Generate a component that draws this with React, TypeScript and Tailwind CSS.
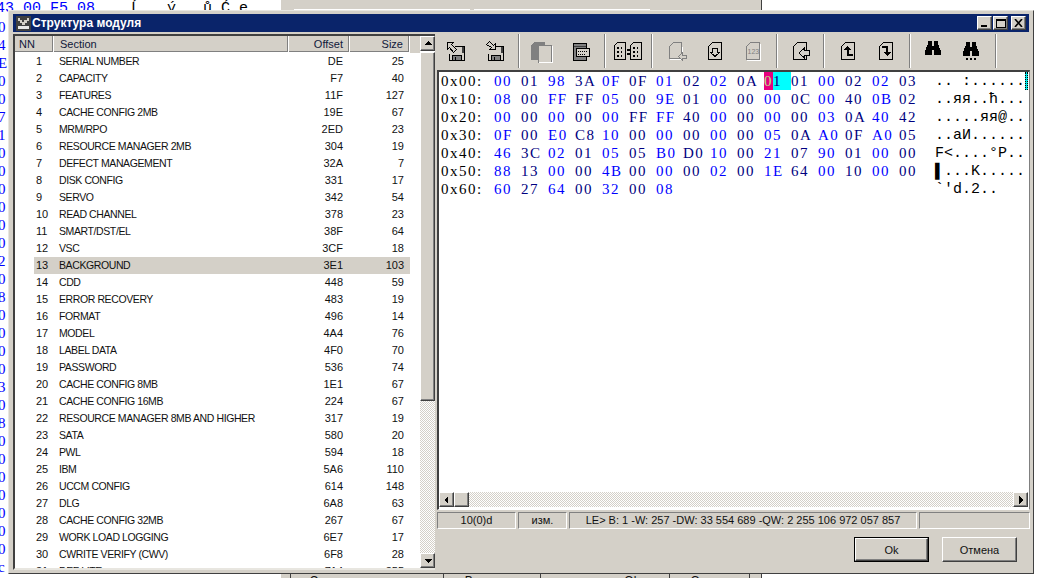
import type { ReactNode } from "react";

const raised =
  "bg-[#d4d0c8] border border-t-white border-l-white border-r-[#404040] border-b-[#404040] shadow-[inset_-1px_-1px_0_#808080]";
const thinSunken = "border border-t-[#808080] border-l-[#808080] border-r-white border-b-white";
const dither = "bg-[repeating-conic-gradient(#d4d0c8_0_25%,#fff_0_50%)] bg-[length:2px_2px]";

const sections: [string, string, string][] = [
  ["SERIAL NUMBER", "DE", "25"],
  ["CAPACITY", "F7", "40"],
  ["FEATURES", "11F", "127"],
  ["CACHE CONFIG 2MB", "19E", "67"],
  ["MRM/RPO", "2ED", "23"],
  ["RESOURCE MANAGER 2MB", "304", "19"],
  ["DEFECT MANAGEMENT", "32A", "7"],
  ["DISK CONFIG", "331", "17"],
  ["SERVO", "342", "54"],
  ["READ CHANNEL", "378", "23"],
  ["SMART/DST/EL", "38F", "64"],
  ["VSC", "3CF", "18"],
  ["BACKGROUND", "3E1", "103"],
  ["CDD", "448", "59"],
  ["ERROR RECOVERY", "483", "19"],
  ["FORMAT", "496", "14"],
  ["MODEL", "4A4", "76"],
  ["LABEL DATA", "4F0", "70"],
  ["PASSWORD", "536", "74"],
  ["CACHE CONFIG 8MB", "1E1", "67"],
  ["CACHE CONFIG 16MB", "224", "67"],
  ["RESOURCE MANAGER 8MB AND HIGHER", "317", "19"],
  ["SATA", "580", "20"],
  ["PWL", "594", "18"],
  ["IBM", "5A6", "110"],
  ["UCCM CONFIG", "614", "148"],
  ["DLG", "6A8", "63"],
  ["CACHE CONFIG 32MB", "267", "67"],
  ["WORK LOAD LOGGING", "6E7", "17"],
  ["CWRITE VERIFY (CWV)", "6F8", "28"],
  ["DEF LITE", "714", "355"],
];

const hexRows: { addr: string; bytes: string[]; ascii: string }[] = [
  { addr: "0x00:", bytes: "00 01 98 3A 0F 0F 01 02 02 0A 01 01 00 02 02 03".split(" "), ascii: ".. :......" },
  { addr: "0x10:", bytes: "08 00 FF FF 05 00 9E 01 00 00 00 0C 00 40 0B 02".split(" "), ascii: "..яя..ћ..." },
  { addr: "0x20:", bytes: "00 00 00 00 00 FF FF 40 00 00 00 00 03 0A 40 42".split(" "), ascii: ".....яя@.." },
  { addr: "0x30:", bytes: "0F 00 E0 C8 10 00 00 00 00 00 05 0A A0 0F A0 05".split(" "), ascii: "..аИ......" },
  { addr: "0x40:", bytes: "46 3C 02 01 05 05 B0 D0 10 00 21 07 90 01 00 00".split(" "), ascii: "F<....°P.." },
  { addr: "0x50:", bytes: "88 13 00 00 4B 00 00 00 02 00 1E 64 00 10 00 00".split(" "), ascii: "▌...K....." },
  { addr: "0x60:", bytes: "60 27 64 00 32 00 08".split(" "), ascii: "`'d.2.." },
];

const edgeChars = "0 4 E 0 0 7 1 0 0 0 0 0 0 2 0 8 0 0 0 0 3 0 8 0 0 0 0 0 0 0 c".split(" ");

const Tri = ({ dir }: { dir: "up" | "down" | "left" | "right" }) => {
  const pts = {
    up: "4,1 8,5 0,5",
    down: "0,2 8,2 4,6",
    left: "5,0 5,8 1,4",
    right: "2,0 2,8 6,4",
  }[dir];
  return (
    <svg width="8" height="8" viewBox="0 0 8 8" shapeRendering="crispEdges">
      <polygon points={pts} fill="#000" />
    </svg>
  );
};

const ScrollBtn = ({ dir }: { dir: "up" | "down" | "left" | "right" }) => (
  <div className={`w-[15px] h-[15px] shrink-0 flex items-center justify-center ${raised}`}>
    <Tri dir={dir} />
  </div>
);

const Icon = ({ children }: { children: ReactNode }) => (
  <svg width="20" height="20" viewBox="0 0 20 20" shapeRendering="crispEdges" fill="none">
    {children}
  </svg>
);

const Floppy = () => (
  <>
    <path d="M8.5 5.5H18.5V19.5H3.5V12.5" stroke="#000" />
    <rect x="7" y="15" width="8" height="4" fill="#808080" />
    <path d="M6.5 14.5H15.5V19.5H6.5ZM9.5 16V19" stroke="#000" />
    <path d="M16 6H18V12H16Z" fill="#404040" />
  </>
);

const FloppyOut = () => (
  <Icon>
    <Floppy />
    <path d="M1.5 1.5H7.5L5.5 3.5L10.5 8.5L7.5 11.5L3.5 6.5L1.5 8.5Z" fill="#d4d0c8" stroke="#000" />
  </Icon>
);

const FloppyIn = () => (
  <Icon>
    <Floppy />
    <path d="M10.5 8.5H4.5L6.5 6.5L1.5 3.5L4.5 0.5L8.5 4.5L10.5 2.5Z" fill="#d4d0c8" stroke="#000" />
  </Icon>
);

const Doc = ({ children }: { children?: ReactNode }) => (
  <Icon>
    <path d="M3.5 5.5L7.5 1.5H16.5V18.5H3.5Z" stroke="#000" />
    {children}
  </Icon>
);

const CopyIcon = () => (
  <svg width="22" height="24" viewBox="0 0 22 24" shapeRendering="crispEdges" fill="none">
    <path d="M3 3H14V6H7V21H0V6Z" fill="#808080" />
    <path d="M7.5 6.5H20.5V23.5H7.5Z" fill="#d4d0c8" stroke="#808080" />
    <path d="M21.5 7V23.5H8" stroke="#fff" />
  </svg>
);

const PrinterIcon = () => (
  <Icon>
    <path d="M2.5 2.5H15.5V19.5H2.5Z" fill="#808080" stroke="#000" />
    <path d="M3 5H15" stroke="#404040" />
    <path d="M5.5 7.5H18.5V15.5H5.5Z" fill="#d4d0c8" stroke="#000" />
    <path d="M7 10H17M7 13H15" stroke="#000" strokeDasharray="1 1" />
  </Icon>
);

const Bits = ({ x }: { x: number }) => (
  <g fill="#000">
    {[6, 10, 14].map((y) => (
      <g key={y}>
        <rect x={x} y={y} width="2" height="2" />
        <rect x={x + 4} y={y} width="1" height="2" />
      </g>
    ))}
  </g>
);

const CompareIcon = () => (
  <svg width="28" height="20" viewBox="0 0 28 20" shapeRendering="crispEdges" fill="none">
    <path d="M0.5 4.5L3.5 1.5H11.5V18.5H0.5Z" stroke="#000" />
    <path d="M16.5 4.5L19.5 1.5H27.5V18.5H16.5Z" stroke="#000" />
    <Bits x={3} />
    <Bits x={19} />
    <rect x="13" y="8" width="3" height="2" fill="#000" />
    <rect x="13" y="12" width="3" height="2" fill="#000" />
  </svg>
);

const GhostDoc = () => (
  <Icon>
    <path d="M2.5 5.5L6.5 1.5H14.5V17.5H2.5Z" stroke="#808080" />
    <path d="M3 18.5H15.5V6" stroke="#fff" />
    <path d="M11.5 15.5L15.5 11.5V14H19.5V17H15.5V19.5Z" fill="#d4d0c8" stroke="#808080" />
  </Icon>
);

const NumDoc = () => (
  <Icon>
    <path d="M3.5 5.5L7.5 1.5H16.5V18.5H3.5Z" stroke="#808080" />
    <path d="M4 19.5H17.5V3" stroke="#fff" />
    <text x="4.5" y="13" fontSize="7" fontFamily="Liberation Sans, sans-serif" fill="#808080">
      123
    </text>
  </Icon>
);

const Binoculars = ({ dots }: { dots?: boolean }) => (
  <svg width="16" height="18" viewBox="0 0 16 18" shapeRendering="crispEdges" className={dots ? "" : "-mt-[2px]"}>
    <path d="M3 0H7V5H9V0H13V3L16 10V14H9V9H7V14H0V10L3 3Z" fill="#000" />
    {dots && (
      <g fill="#000">
        <rect x="3" y="16" width="2" height="2" />
        <rect x="7" y="16" width="2" height="2" />
        <rect x="11" y="16" width="2" height="2" />
      </g>
    )}
  </svg>
);

const Slot = ({ className, children }: { className: string; children: ReactNode }) => (
  <div className={`${className} h-full flex items-center justify-center`}>{children}</div>
);

const Sep = ({ className }: { className: string }) => (
  <div className={`${className} h-[34px] flex justify-center`}>
    <div className="w-[2px] h-full border-l border-l-[#808080] border-r border-r-white" />
  </div>
);

const Toolbar = () => (
  <div className="h-[38px] flex items-center">
    <Slot className="w-[37px]"><FloppyOut /></Slot>
    <Slot className="w-[42px]"><FloppyIn /></Slot>
    <Sep className="w-[6px]" />
    <Slot className="w-[40px]"><CopyIcon /></Slot>
    <Slot className="w-[38px]"><PrinterIcon /></Slot>
    <Sep className="w-[10px]" />
    <Slot className="w-[36px]"><CompareIcon /></Slot>
    <Sep className="w-[12px]" />
    <Slot className="w-[38px]"><GhostDoc /></Slot>
    <Slot className="w-[37px]">
      <Doc>
        <path d="M7.5 7.5H12.5V11.5H14.5L10 15.5L5.5 11.5H7.5Z" stroke="#000" />
      </Doc>
    </Slot>
    <Slot className="w-[40px]"><NumDoc /></Slot>
    <Sep className="w-[8px]" />
    <Slot className="w-[38px]">
      <Doc>
        <path d="M19.5 9.5V14.5H14.5V17L9 12L14.5 7V9.5Z" fill="#d4d0c8" stroke="#000" />
      </Doc>
    </Slot>
    <Sep className="w-[10px]" />
    <Slot className="w-[37px]">
      <Doc>
        <path d="M9 5L13 9H11V13H15V15H9V9H6Z" fill="#000" />
      </Doc>
    </Slot>
    <Slot className="w-[40px]">
      <Doc>
        <path d="M6 5H12V11H15L11 15L7 11H10V7H6Z" fill="#000" />
      </Doc>
    </Slot>
    <Sep className="w-[8px]" />
    <Slot className="w-[37px]"><Binoculars /></Slot>
    <Slot className="w-[40px]"><Binoculars dots /></Slot>
    <Sep className="w-[10px]" />
  </div>
);

const SectionList = () => (
  <div className="ml-[1px] mt-[2px] w-[422px] h-[536px] flex border-l-2 border-t-2 border-l-[#404040] border-t-[#404040] border-b-2 border-b-[#e8e6e0] bg-white">
    <div className="w-[405px] overflow-hidden">
      <div className="h-[17px] flex bg-[#d4d0c8] text-[#10183a]">
        <div className="w-[39px] pl-[4px] border-r border-r-white border-b border-b-white shadow-[inset_-1px_-1px_0_#808080]">NN</div>
        <div className="w-[235px] pl-[6px] border-r border-r-white border-b border-b-white shadow-[inset_-1px_-1px_0_#808080]">Section</div>
        <div className="w-[61px] pr-[6px] text-right border-r border-r-white border-b border-b-white shadow-[inset_-1px_-1px_0_#808080]">Offset</div>
        <div className="w-[60px] pr-[6px] text-right border-r border-r-white border-b border-b-white shadow-[inset_-1px_-1px_0_#808080]">Size</div>
        <div className="flex-1" />
      </div>
      {sections.map(([name, offset, size], i) => (
        <div key={name} className="h-[17px] flex pl-[19px]">
          <div className={`w-[376px] flex ${i === 12 ? "bg-[#d4d0c8]" : ""}`}>
            <div className="w-[25px] pl-[2px]">{i + 1}</div>
            <div className="w-[235px] text-[10.5px] tracking-[-0.4px]">{name}</div>
            <div className="w-[60px] text-right -ml-[11px] mr-[1px]">{offset}</div>
            <div className="w-[60px] text-right">{size}</div>
          </div>
        </div>
      ))}
    </div>
    <div className="w-[15px] h-full flex flex-col">
      <ScrollBtn dir="up" />
      <div className={`w-[15px] h-[349px] mt-[1px] shrink-0 ${raised}`} />
      <div className={`flex-1 ${dither}`} />
      <ScrollBtn dir="down" />
    </div>
  </div>
);

const HexPanel = () => (
  <div className="h-[440px] flex flex-col border-l-2 border-t-2 border-l-[#404040] border-t-[#404040] border-r border-r-[#808080] border-b border-b-white bg-white">
    <div className="flex-1 pl-[2px] font-['Liberation_Mono',monospace] text-[15px] leading-[18px] whitespace-pre">
      {hexRows.map((row, r) => (
        <div key={row.addr} className="h-[18px] flex">
          <div className="w-[53px] text-black font-['Liberation_Serif',serif] tracking-[1.5px]">{row.addr}</div>
          <div className="w-[442px] flex font-['Liberation_Serif',serif] tracking-[1.5px]">
            {row.bytes.map((b, c) =>
              r === 0 && c === 10 ? (
                <div key={c} className="w-[27px] flex">
                  <span className="w-[9px] bg-[#e6007e] text-[#b8e986]">{b[0]}</span>
                  <span className="w-[18px] bg-[#00ffff] text-[#000080]">{b[1]}</span>
                </div>
              ) : (
                <div key={c} className={`w-[27px] ${c % 2 === 0 ? "text-[#0000ff]" : "text-[#000080]"}`}>
                  {b}
                </div>
              ),
            )}
          </div>
          <div className="w-[90px] text-black relative -ml-[1px] pt-[1px]">
            {row.ascii}
            {r === 0 && <span className="absolute left-[90px] top-0 w-[3px] h-[18px] bg-[#00e5e5] border-x border-dotted border-x-black" />}
          </div>
        </div>
      ))}
    </div>
    <div className="h-[17px] flex pr-[1px] pb-[2px]">
      <ScrollBtn dir="left" />
      <div className={`w-[15px] h-[15px] shrink-0 ${raised}`} />
      <div className={`flex-1 ${dither}`} />
      <ScrollBtn dir="right" />
    </div>
  </div>
);

const StatusBar = () => (
  <div className="mt-[2px] h-[17px] flex leading-[15px] text-center">
    <div className={`w-[79px] ${thinSunken}`}>10(0)d</div>
    <div className={`w-[49px] ml-[2px] ${thinSunken}`}>изм.</div>
    <div className={`w-[348px] ml-[2px] ${thinSunken}`}>LE&gt; B: 1 -W: 257 -DW: 33 554 689 -QW: 2 255 106 972 057 857</div>
    <div className={`w-[111px] ml-[2px] ${thinSunken}`} />
  </div>
);

const DialogButtons = () => (
  <div className="mt-[8px] flex justify-end gap-[13px] pr-[13px]">
    <div className="w-[75px] h-[25px] border border-black bg-[#d4d0c8]">
      <div className={`w-full h-full flex items-center justify-center ${raised}`}>Ok</div>
    </div>
    <div className={`w-[75px] h-[25px] flex items-center justify-center ${raised}`}>Отмена</div>
  </div>
);

const CaptionButtons = () => (
  <div className="flex items-center mr-[3px]">
    <div className={`w-[15px] h-[14px] relative ${raised}`}>
      <div className="absolute left-[3px] bottom-[2px] w-[6px] h-[2px] bg-black" />
    </div>
    <div className={`w-[15px] h-[14px] ml-[1px] flex items-center justify-center ${raised}`}>
      <div className="w-[10px] h-[9px] border border-black border-t-2" />
    </div>
    <div className={`w-[15px] h-[14px] ml-[3px] flex items-center justify-center ${raised}`}>
      <svg width="9" height="8" viewBox="0 0 9 8">
        <path d="M1 0L8 8M8 0L1 8" stroke="#000" strokeWidth="1.6" />
      </svg>
    </div>
  </div>
);

const AppIcon = () => (
  <svg width="15" height="15" viewBox="0 0 15 15" shapeRendering="crispEdges" className="ml-[3px]">
    <rect width="15" height="15" fill="#404040" />
    <path d="M2 2H4V4H6V6H8V4H11V2H13V5H11V7H9V9H6V7H4V5H2Z" fill="#d4d0c8" />
    <rect x="2" y="10" width="11" height="3" fill="#e8e8e8" />
  </svg>
);

const Backdrop = () => (
  <div className="absolute inset-0 flex">
    <div className="w-[280px] h-full bg-white overflow-hidden font-['Liberation_Mono',monospace] text-[15px] leading-[18px] whitespace-pre">
      <div className="h-[18px] -ml-[4px] text-[#0000ff]">
        43 00 F5 08<span className="text-black">    Ĺ   ý   ů Ć ę</span>
      </div>
      {edgeChars.map((c, i) => (
        <div key={i} className="h-[18px] -ml-[2px] text-[#0000ff] font-['Liberation_Serif',serif]">
          {c}
        </div>
      ))}
    </div>
    <div className="w-[482px] h-full bg-[#d4d0c8] border-l border-l-white border-r border-r-[#404040] flex flex-col justify-between overflow-hidden">
      <div className="mt-[9px] ml-[13px] flex gap-[4px]">
        <div className="w-[176px] h-px bg-white" />
        <div className="w-[176px] h-px bg-white" />
      </div>
      <div className="h-[4px] flex text-center text-[12px] leading-[14px] ml-[9px]">
        <div className="w-[154px] pr-[14px] border-x border-x-[#404040]">Структура модуля</div>
        <div className="w-[90px] ml-[7px] border-r border-r-[#404040]">Выполнить</div>
        <div className="w-[75px] ml-[54px] border-r border-r-[#404040]">Ok</div>
        <div className="w-[75px] ml-[5px] border-r border-r-[#404040]">Отмена</div>
      </div>
    </div>
    <div className="flex-1 h-full bg-white" />
  </div>
);

export default function App() {
  return (
    <div className="relative w-[1038px] h-[578px] overflow-hidden font-['Liberation_Sans',sans-serif] text-[11px] leading-[16px] text-[#111]">
      <Backdrop />
      {/* Dialog window */}
      <div className="absolute left-[8px] top-[10px] w-[1026px] h-[564px] bg-[#d4d0c8] border border-t-[#e8e6e0] border-l-[#e8e6e0] border-r-[#404040] border-b-[#404040] p-[3px] flex flex-col">
        <div className="h-[18px] mx-px shrink-0 bg-[#0a246a] flex items-center justify-between">
          <div className="flex items-center">
            <AppIcon />
            <span className="ml-[1px] text-white font-bold text-[12px]">Структура модуля</span>
          </div>
          <CaptionButtons />
        </div>
        <div className="flex flex-1 min-h-0">
          <SectionList />
          <div className="ml-[2px] flex-1 min-w-0">
            <Toolbar />
            <HexPanel />
            <StatusBar />
            <DialogButtons />
          </div>
        </div>
      </div>
    </div>
  );
}
